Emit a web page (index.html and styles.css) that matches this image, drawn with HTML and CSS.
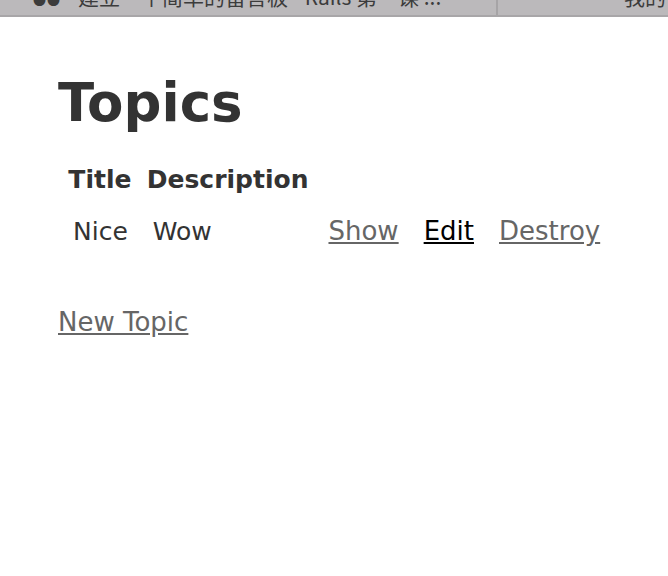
FILE: index.html
```html
<!DOCTYPE html>
<html lang="en">
<head>
<meta charset="utf-8">
<title>Topics</title>
<link rel="stylesheet" href="styles.css">
</head>
<body>
<div class="tabbar">
  <div class="tab tab-main"><span class="tab-text"><span class="tab-dots">● ●</span>建立一个简单的留言板 - Rails 第一课 ...</span></div>
  <div class="tab tab-side"><span class="tab-text">我的</span></div>
</div>
<main class="page">
  <h1 class="title">Topics</h1>
  <table class="topics">
    <thead>
      <tr>
        <th>Title</th>
        <th>Description</th>
        <th colspan="3"></th>
      </tr>
    </thead>
    <tbody>
      <tr>
        <td>Nice</td>
        <td>Wow</td>
        <td><a class="link visited" href="#">Show</a></td>
        <td><a class="link" href="#">Edit</a></td>
        <td><a class="link visited" href="#">Destroy</a></td>
      </tr>
    </tbody>
  </table>
  <p class="new-link"><a class="link visited" href="#">New Topic</a></p>
</main>
</body>
</html>
```
FILE: styles.css
```css
html, body {
  margin: 0;
  padding: 0;
  background: #fff;
}

body {
  font-family: "DejaVu Sans", Verdana, sans-serif;
  color: #333;
}

.tabbar {
  display: flex;
  height: 15px;
  background: #bbb9bb;
  border-bottom: 2px solid #a8a6a8;
  overflow: hidden;
}

.tab {
  overflow: hidden;
  white-space: nowrap;
}

.tab-main {
  width: 498px;
  padding-left: 33px;
  box-sizing: border-box;
  border-right: 2px solid #a6a4a6;
}

.tab-side {
  flex: 1;
  text-align: right;
}

.tab-text {
  display: block;
  font-family: "Noto Sans CJK SC", "DejaVu Sans", sans-serif;
  font-size: 21px;
  line-height: 21px;
  margin-top: -14px;
  color: #3c3c3c;
}

.tab-dots {
  display: inline-block;
  width: 45px;
  font-size: 13px;
  letter-spacing: -1px;
}

.tab-side .tab-text {
  margin-right: 2px;
}

.page {
  padding: 56px 57px 0;
  font-size: 25px;
  line-height: 36px;
}

.title {
  margin: 0 0 0 1px;
  font-size: 53px;
  line-height: 60px;
  font-weight: bold;
}

.topics {
  margin: 25px 0 0 2px;
  border-spacing: 3px;
  font-size: 25px;
  line-height: 36px;
}

.topics th {
  padding: 1px 6px 12px 5px;
  font-weight: bold;
  text-align: center;
}

.topics td {
  padding: 0 11px 14px;
}

.new-link {
  margin: 37px 0 0 1px;
}

.link {
  color: #000;
  font-size: 26px;
  text-decoration: underline;
}

.link.visited {
  color: #666;
}
```
